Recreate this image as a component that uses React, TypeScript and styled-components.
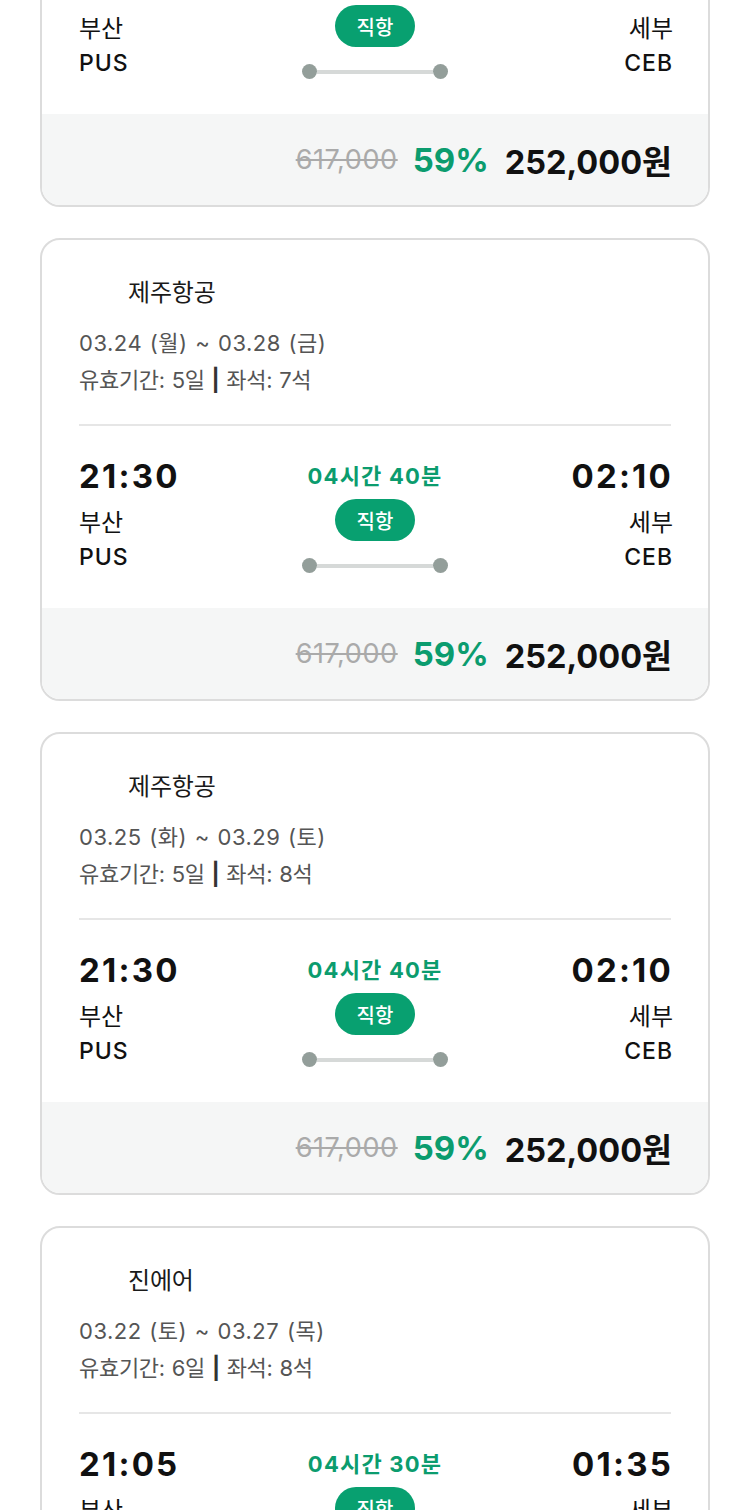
import React from "react";
import styled, { createGlobalStyle } from "styled-components";

const Global = createGlobalStyle`
  html, body { margin: 0; padding: 0; background: #fff; }
  body {
    width: 750px;
    height: 1510px;
    overflow: hidden;
    font-family: Inter, "Noto Sans CJK KR", "Noto Sans", sans-serif;
    color: #111;
  }
`;

const GREEN = "#0b9c6e";

const List = styled.div`
  display: flex;
  flex-direction: column;
  gap: 31px;
  padding: 0 40px;
  margin-top: -256px;
`;

const Card = styled.div`
  box-sizing: border-box;
  height: 463px;
  border: 2px solid #dcdcdc;
  border-radius: 20px;
  overflow: hidden;
  display: flex;
  flex-direction: column;
  background: #fff;
`;

const Body = styled.div`
  flex: 1;
  padding: 0 37px;
  display: flex;
  flex-direction: column;
`;

const AirlineRow = styled.div`
  display: flex;
  align-items: center;
  gap: 10px;
  height: 36px;
  margin-top: 32px;
`;

const Logo = styled.div`
  width: 39px;
  height: 36px;
`;

const AirlineName = styled.div`
  font-size: 24px;
  color: #1a1a1a;
  letter-spacing: -0.2px;
`;

const InfoLine = styled.div<{ $top: number; $ls: number }>`
  font-size: 22px;
  color: #555;
  letter-spacing: ${(p) => p.$ls}px;
  word-spacing: 1px;
  line-height: 30px;
  margin-top: ${(p) => p.$top}px;
`;

const Sep = styled.span`
  font-weight: 700;
  color: #333;
`;

const Divider = styled.div`
  height: 2px;
  background: #e6e6e6;
  margin-top: 29px;
`;

const Route = styled.div`
  display: grid;
  grid-template-columns: 1fr auto 1fr;
  margin-top: 32px;
`;

const End = styled.div<{ $right?: boolean }>`
  display: flex;
  flex-direction: column;
  align-items: ${(p) => (p.$right ? "flex-end" : "flex-start")};
  margin-right: ${(p) => (p.$right ? "-2px" : "0")};
`;

const Time = styled.div`
  font-size: 33px;
  font-weight: 700;
  letter-spacing: 2.2px;
  line-height: 36px;
  color: #111;
`;

const City = styled.div`
  font-size: 24px;
  line-height: 30px;
  margin-top: 14px;
  color: #111;
`;

const Code = styled.div`
  font-size: 23px;
  font-weight: 500;
  line-height: 30px;
  margin-top: 4px;
  letter-spacing: 1px;
  color: #111;
`;

const Middle = styled.div`
  display: flex;
  flex-direction: column;
  align-items: center;
`;

const Duration = styled.div`
  font-size: 22px;
  font-weight: 700;
  color: ${GREEN};
  line-height: 36px;
  letter-spacing: 1.2px;
`;

const Pill = styled.div`
  margin-top: 5px;
  width: 80px;
  height: 42px;
  border-radius: 21px;
  background: #08a070;
  color: #fff;
  font-size: 20px;
  font-weight: 500;
  display: flex;
  align-items: center;
  justify-content: center;
`;

const Track = styled.div`
  margin-top: 17px;
  width: 146px;
  display: flex;
  align-items: center;
`;

const Dot = styled.div`
  width: 15px;
  height: 15px;
  border-radius: 50%;
  background: #939e9a;
  flex: none;
`;

const Line = styled.div`
  flex: 1;
  height: 4px;
  background: #d6d9d8;
`;

const Footer = styled.div`
  height: 91px;
  background: #f5f6f6;
  display: flex;
  align-items: center;
  justify-content: flex-end;
  gap: 18px;
  padding: 0 37px;
`;

const OldPrice = styled.span`
  font-size: 27px;
  color: #aaa;
  letter-spacing: 0.6px;
  margin-right: -3px;
  text-decoration: line-through;
  text-decoration-thickness: 2px;
`;

const Discount = styled.span`
  font-size: 33px;
  font-weight: 700;
  color: ${GREEN};
  margin-right: -2px;
`;

const Price = styled.span`
  font-size: 32.5px;
  font-weight: 700;
  color: #111;
  margin-right: -1px;
`;

type Flight = {
  airline: string;
  dates: string;
  days: string;
  seats: string;
  dep: string;
  arr: string;
  dur: string;
};

const flights: Flight[] = [
  { airline: "제주항공", dates: "03.23 (일) ~ 03.27 (목)", days: "5일", seats: "7석", dep: "21:30", arr: "02:10", dur: "04시간 40분" },
  { airline: "제주항공", dates: "03.24 (월) ~ 03.28 (금)", days: "5일", seats: "7석", dep: "21:30", arr: "02:10", dur: "04시간 40분" },
  { airline: "제주항공", dates: "03.25 (화) ~ 03.29 (토)", days: "5일", seats: "8석", dep: "21:30", arr: "02:10", dur: "04시간 40분" },
  { airline: "진에어", dates: "03.22 (토) ~ 03.27 (목)", days: "6일", seats: "8석", dep: "21:05", arr: "01:35", dur: "04시간 30분" },
];

function FlightCard({ f }: { f: Flight }) {
  return (
    <Card>
      <Body>
        <AirlineRow>
          <Logo />
          <AirlineName>{f.airline}</AirlineName>
        </AirlineRow>
        <InfoLine $top={20} $ls={0.5}>{f.dates}</InfoLine>
        <InfoLine $top={7} $ls={-0.3}>
          유효기간: {f.days} <Sep>|</Sep> 좌석: {f.seats}
        </InfoLine>
        <Divider />
        <Route>
          <End>
            <Time>{f.dep}</Time>
            <City>부산</City>
            <Code>PUS</Code>
          </End>
          <Middle>
            <Duration>{f.dur}</Duration>
            <Pill>직항</Pill>
            <Track>
              <Dot />
              <Line />
              <Dot />
            </Track>
          </Middle>
          <End $right>
            <Time>{f.arr}</Time>
            <City>세부</City>
            <Code>CEB</Code>
          </End>
        </Route>
      </Body>
      <Footer>
        <OldPrice>617,000</OldPrice>
        <Discount>59%</Discount>
        <Price>252,000원</Price>
      </Footer>
    </Card>
  );
}

export default function App() {
  return (
    <>
      <Global />
      <List>
        {flights.map((f, i) => (
          <FlightCard key={i} f={f} />
        ))}
      </List>
    </>
  );
}
